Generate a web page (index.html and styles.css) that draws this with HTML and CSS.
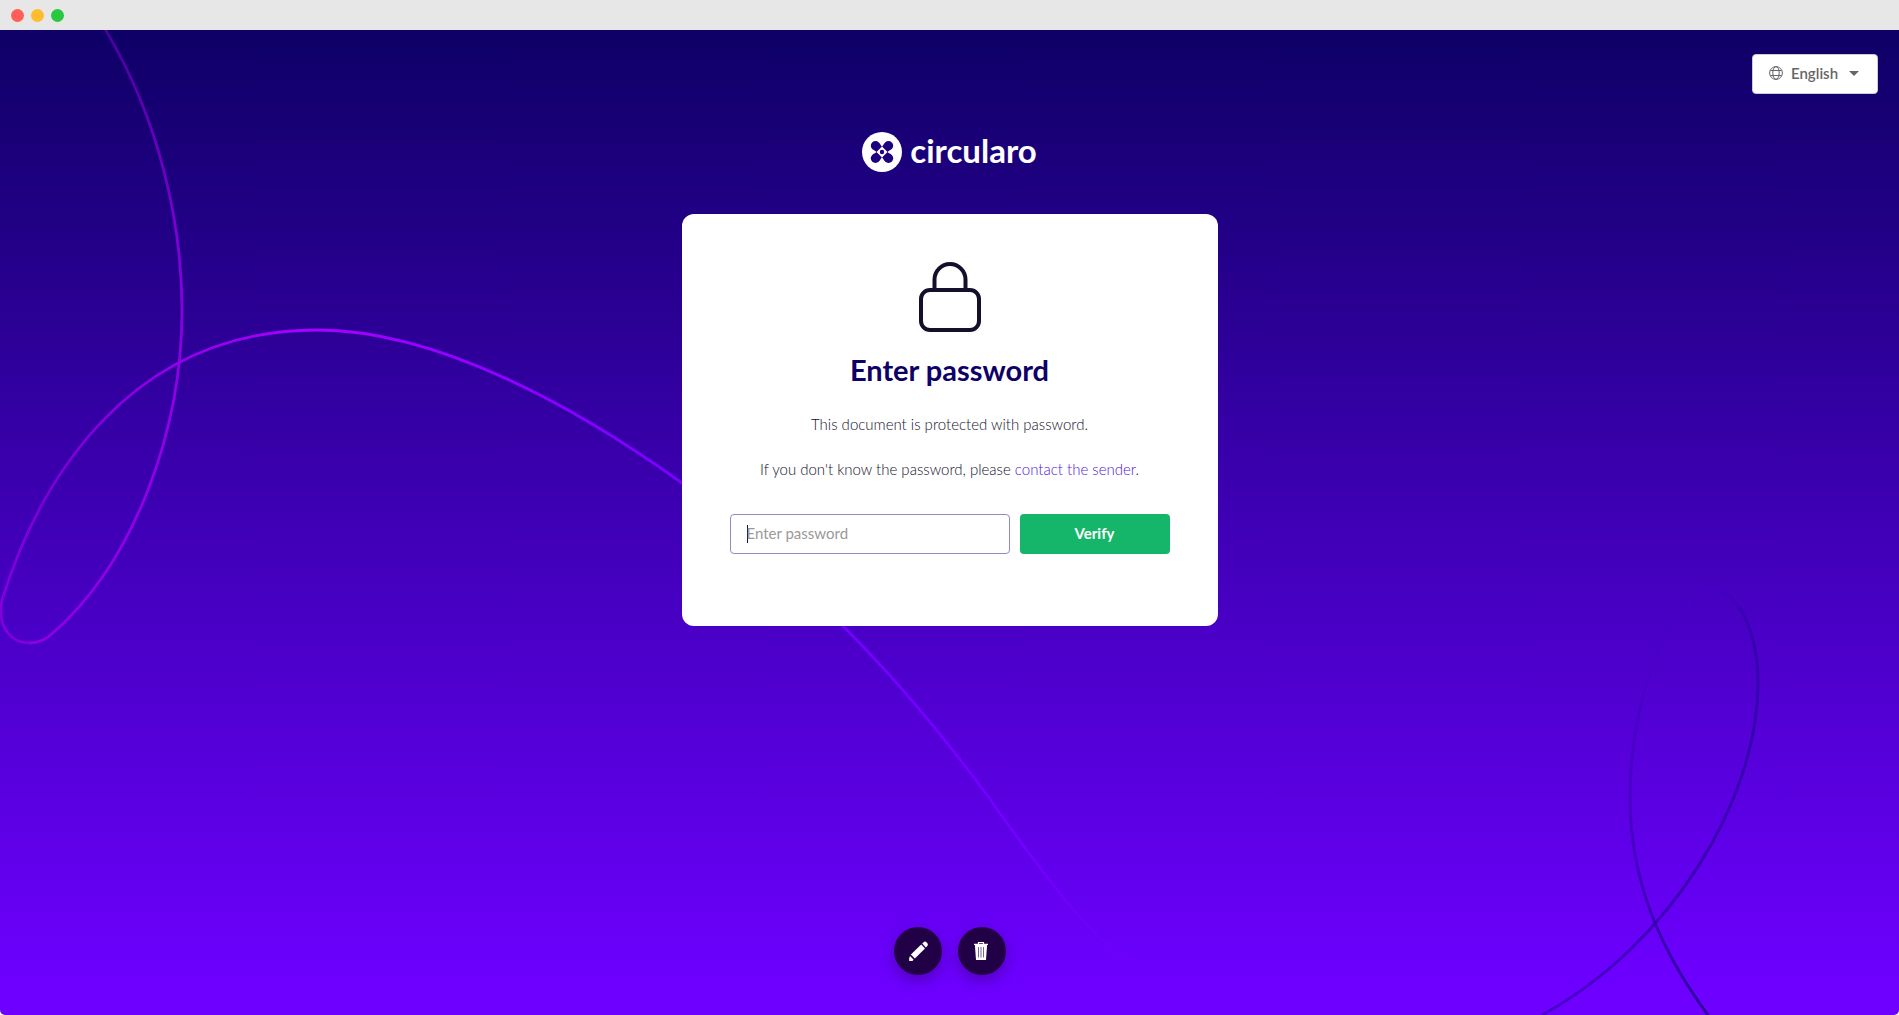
FILE: index.html
```html
<!DOCTYPE html>
<html lang="en">
<head>
  <meta charset="UTF-8" />
  <meta name="viewport" content="width=device-width, initial-scale=1.0" />
  <title>Enter password - Circularo</title>
  <link rel="stylesheet" href="styles.css">
</head>
<body>
  <!-- Window bar -->
  <div class="window-bar">
    <span class="dot dot-red"></span>
    <span class="dot dot-yellow"></span>
    <span class="dot dot-green"></span>
  </div>

  <div class="page">
    <!-- Background lines -->
    <svg class="lines" viewBox="0 30 1899 985" preserveAspectRatio="xMidYMin slice" fill="none" stroke-width="2.8" aria-hidden="true">
      <defs>
        <linearGradient id="lineTop" gradientUnits="userSpaceOnUse" x1="0" y1="30" x2="0" y2="643">
          <stop offset="0" stop-color="#4a009c" />
          <stop offset="0.35" stop-color="#7e00d6" />
          <stop offset="0.6" stop-color="#9000e6" />
          <stop offset="1" stop-color="#8c00e4" />
        </linearGradient>
        <linearGradient id="lineMain" gradientUnits="userSpaceOnUse" x1="0" y1="0" x2="1150" y2="0">
          <stop offset="0" stop-color="#8200dc" />
          <stop offset="0.05" stop-color="#7a00d4" />
          <stop offset="0.16" stop-color="#9200ea" />
          <stop offset="0.27" stop-color="#a800ff" />
          <stop offset="0.6" stop-color="#7600ff" />
          <stop offset="0.9" stop-color="#7200ff" />
          <stop offset="1" stop-color="#7000ff" stop-opacity="0" />
        </linearGradient>
        <linearGradient id="lineDark" gradientUnits="userSpaceOnUse" x1="1542" y1="1015" x2="1758" y2="683">
          <stop offset="0" stop-color="#4a00cc" />
          <stop offset="0.5" stop-color="#3a00b2" />
          <stop offset="1" stop-color="#3600ae" />
        </linearGradient>
        <linearGradient id="lineFade" gradientUnits="userSpaceOnUse" x1="1713" y1="0" x2="1758" y2="0">
          <stop offset="0" stop-color="#4700c4" />
          <stop offset="1" stop-color="#3600ae" />
        </linearGradient>
        <linearGradient id="lineDown" gradientUnits="userSpaceOnUse" x1="0" y1="591" x2="0" y2="1015">
          <stop offset="0" stop-color="#4700c6" />
          <stop offset="0.3" stop-color="#4a00ca" />
          <stop offset="0.6" stop-color="#4600c4" />
          <stop offset="0.85" stop-color="#3600ae" />
          <stop offset="1" stop-color="#2c0098" />
        </linearGradient>
      </defs>
      <path stroke="url(#lineTop)" d="M105 29C160 120 182 225 182 310C182 430 135 560 54 632C47 639 38 643 29 643" />
      <path stroke="url(#lineMain)" d="M29 643C12 643 1 629 1 612C1 605 1 601 3 597C40 480 130 330 317 330C440 330 580 410 682 483C745 528 800 580 843 626C900 683 950 745 987 795C1040 870 1090 940 1150 980" />
      <path stroke="url(#lineDark)" d="M1542 1015C1670 945 1758 800 1758 683" />
      <path stroke="url(#lineFade)" d="M1758 683C1758 640 1742 591 1713 591" />
      <path stroke="url(#lineDown)" d="M1713 591C1675 591 1630 690 1630 797C1630 880 1660 950 1708 1015" />
    </svg>

    <!-- Language picker -->
    <header class="top">
      <label class="language">
        <svg class="globe" viewBox="0 0 14 14" fill="none" stroke="#666" aria-hidden="true">
          <circle cx="7" cy="7" r="6.4" />
          <ellipse cx="7" cy="7" rx="3.2" ry="6.4" />
          <path d="M1.4 4.5h11.2M1.4 9.5h11.2" />
        </svg>
        <select class="language-select" aria-label="Language">
          <option>English</option>
        </select>
        <span class="arrow"></span>
      </label>
    </header>

    <main class="main">
      <a class="logo" href="#">
        <svg class="logo-mark" viewBox="0 0 40 40" aria-hidden="true">
          <circle cx="20" cy="20" r="20" fill="#fff" />
          <g fill="#1d007e">
            <circle cx="13.5" cy="13.8" r="4.7" />
            <circle cx="26.5" cy="13.8" r="4.7" />
            <circle cx="13.5" cy="26.2" r="4.7" />
            <circle cx="26.5" cy="26.2" r="4.7" />
            <path d="M17.5 11.3L20 14.8L22.5 11.3L28.5 17.5L25.5 20L28.5 22.5L22.5 28.7L20 25.2L17.5 28.7L11.5 22.5L14.5 20L11.5 17.5Z" />
          </g>
          <path d="M20 14.500L25.500 20L20 25.500L14.500 20Z" fill="#fff" />
          <circle cx="20" cy="20" r="2.2" fill="#1d007e" />
        </svg>
        <span class="logo-text">circularo</span>
      </a>

      <!-- Password card -->
      <section class="card">
        <svg class="lock" viewBox="0 0 62 70" fill="none" stroke="#14102b" stroke-width="4" aria-hidden="true">
          <rect x="2" y="28" width="58" height="40" rx="9" />
          <path d="M15.500 28V17.500a15.500 15.500 0 0 1 31 0V28" />
        </svg>
        <h1 class="title">Enter password</h1>
        <p class="text">This document is protected with password.</p>
        <p class="text">If you don't know the password, please <a href="#">contact the sender</a>.</p>
        <form class="form">
          <input class="password" type="password" placeholder="Enter password" aria-label="Enter password" autofocus>
          <button class="verify" type="button">Verify</button>
        </form>
      </section>
    </main>

    <!-- Floating actions -->
    <footer class="actions">
      <button class="action" type="button" aria-label="Edit">
        <svg viewBox="0 0 20 20" fill="#fff" aria-hidden="true">
          <path d="M14.200 2.600L15.600 1.200Q17 0 18.500 1.300L19.100 1.900Q20.500 3.500 19.300 5L17.900 6.400Z" />
          <path d="M13.200 3.600L17 7.400L6.900 17.500L2.900 13.600Z" />
          <path d="M2 15L5.500 18.500L4.500 20H1.200V17Z" />
        </svg>
      </button>
      <button class="action" type="button" aria-label="Delete">
        <svg viewBox="0 0 20 20" fill="none" aria-hidden="true">
          <path d="M2 3.300h14M6.500 3V1.500h5V3" stroke="#fff" stroke-width="1.200" />
          <path d="M2.900 4h12.200l-1.100 15H4Z" fill="#fff" />
          <path d="M6.500 6v10.500M9 6v10.500M11.500 6v10.500" stroke="#220046" stroke-opacity=".6" stroke-width="1" />
        </svg>
      </button>
    </footer>
  </div>
</body>
</html>
```
FILE: styles.css
```css
* {
  box-sizing: border-box;
}
body {
  margin: 0;
  min-height: 100vh;
  display: flex;
  flex-direction: column;
  font-family: Lato, "Open Sans", sans-serif;
  font-size: 15px;
  font-variant-ligatures: none;
  color: #14102b;
  background: #fff;
}
/* Window bar */
.window-bar {
  display: flex;
  align-items: center;
  gap: 7px;
  height: 30px;
  padding: 0 11px;
  background: #e7e7e7;
}
.dot {
  width: 13px;
  height: 13px;
  border-radius: 50%;
}
.dot-red {
  background: #ff5f57;
}
.dot-yellow {
  background: #febc2e;
}
.dot-green {
  background: #28c840;
}
/* Page */
.page {
  position: relative;
  flex: 1;
  display: flex;
  flex-direction: column;
  overflow: hidden;
  border-radius: 0 0 5px 5px;
  background: linear-gradient(#0e0066, #6d00ff 97%);
}
.lines {
  position: absolute;
  top: 0;
  left: 0;
  width: 100%;
  height: 100%;
}
.top,
.main,
.actions {
  position: relative;
}
/* Language picker */
.top {
  display: flex;
  justify-content: flex-end;
  padding: 24px 21px 0;
}
.language {
  display: flex;
  align-items: center;
  height: 40px;
  padding: 0 18px 2px 16px;
  border: 1px solid #ccc;
  border-radius: 4px;
  background: #fff;
  cursor: pointer;
}
.globe {
  width: 14px;
  height: 14px;
  margin-right: 8px;
}
.language-select {
  appearance: none;
  padding: 0;
  border: 0;
  background: none;
  font-family: inherit;
  font-size: 15px;
  font-weight: 600;
  color: #666;
  cursor: pointer;
}
.arrow {
  margin-left: 10px;
  border: 5px solid transparent;
  border-top-color: #666;
  border-bottom: 0;
}
/* Logo */
.main {
  display: flex;
  flex-direction: column;
  align-items: center;
  padding: 38px 16px;
}
.logo {
  display: flex;
  align-items: center;
  gap: 8px;
  height: 40px;
  margin-bottom: 42px;
  color: #fff;
  text-decoration: none;
}
.logo-mark {
  width: 40px;
  height: 40px;
}
.logo-text {
  font-size: 33px;
  font-weight: 700;
  line-height: 36px;
  padding-bottom: 4px;
}
/* Card */
.card {
  display: flex;
  flex-direction: column;
  align-items: center;
  width: 100%;
  max-width: 536px;
  padding: 48px 48px 72px;
  border-radius: 12px;
  background: #fff;
  text-align: center;
}
.lock {
  width: 62px;
  height: 70px;
}
.title {
  margin: 18px 0 24px;
  font-size: 29px;
  line-height: 40px;
  font-weight: 700;
  color: #0e0066;
}
.text {
  margin: 0 0 24px;
  font-weight: 300;
  line-height: 21px;
}
.text a {
  color: #5015d8;
  text-decoration: none;
}
.form {
  display: flex;
  gap: 10px;
  width: 100%;
  margin-top: 10px;
}
.password {
  flex: 1;
  min-width: 0;
  height: 40px;
  padding: 0 16px 2px;
  border: 1px solid #938bc0;
  border-radius: 4px;
  outline: none;
  background: #fff;
  font-family: inherit;
  font-size: 15px;
  color: #14102b;
}
/* Steady caret while the field is empty */
.password:focus:placeholder-shown {
  background: linear-gradient(#14102b, #14102b) 16px 50% / 1px 18px no-repeat #fff;
  caret-color: transparent;
}
.password::placeholder {
  color: #999;
}
.verify {
  width: 150px;
  height: 40px;
  padding: 0 0 2px;
  border: 0;
  border-radius: 4px;
  background: #16b66a;
  font-family: inherit;
  font-size: 15px;
  font-variant-ligatures: none;
  font-weight: 700;
  color: #fff;
  cursor: pointer;
}
/* Floating actions */
.actions {
  display: flex;
  justify-content: center;
  gap: 16px;
  margin-top: auto;
  padding-bottom: 40px;
}
.action {
  display: flex;
  align-items: center;
  justify-content: center;
  width: 48px;
  height: 48px;
  padding: 0;
  border: 0;
  border-radius: 50%;
  background: #220046;
  box-shadow: 0 6px 14px rgba(34, 0, 70, 0.35);
  cursor: pointer;
}
.action svg {
  width: 20px;
  height: 20px;
}
```
